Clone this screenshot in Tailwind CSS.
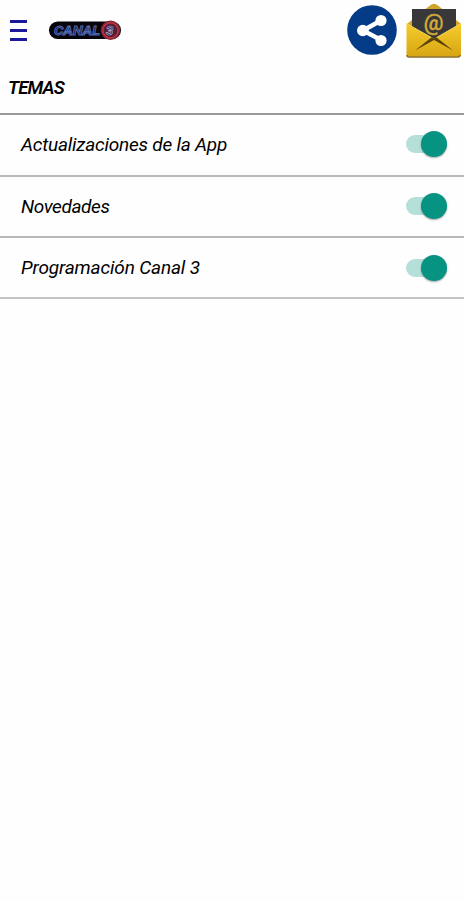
<!DOCTYPE html>
<html lang="es">
  <head>
    <meta charset="UTF-8" />
    <meta name="viewport" content="width=device-width, initial-scale=1.0" />
    <title>Canal 3 - Temas</title>
    <script src="https://cdn.jsdelivr.net/npm/@tailwindcss/browser@4"></script>
  </head>
  <body class="bg-[#fefefe] text-black min-h-screen font-['Roboto','Open_Sans',sans-serif]">
    <header class="flex items-center h-[60px] pl-[10px] pr-[2px]">
      <button class="flex flex-col gap-[6px] w-[17px]" aria-label="Menu">
        <span class="h-[3px] w-full bg-[#1c189c]"></span>
        <span class="h-[3px] w-full bg-[#1c189c]"></span>
        <span class="h-[3px] w-full bg-[#1c189c]"></span>
      </button>

      <!-- Logo -->
      <svg class="ml-[21px] w-[74px] h-[22px]" viewBox="0 0 74 22">
        <rect x="1" y="2.5" width="72" height="17.5" rx="8.7" fill="#08060c" />
        <circle cx="62.5" cy="11.3" r="9.7" fill="#8c2638" />
        <circle cx="62.5" cy="11.3" r="7.5" fill="#591c38" stroke="#c13645" stroke-width="1.2" />
        <text x="6" y="15.5" textLength="46" lengthAdjust="spacingAndGlyphs" font-family="Roboto, sans-serif" font-size="12.5" font-weight="700" font-style="italic" fill="#10215f" stroke="#5469ad" stroke-width="0.8">CANAL</text>
        <text x="58" y="15.8" font-family="Roboto, sans-serif" font-size="13" font-weight="700" font-style="italic" fill="#1c2963" stroke="#a9a5c2" stroke-width="0.7">3</text>
      </svg>

      <!-- Share -->
      <svg class="ml-auto w-[50px] h-[50px]" viewBox="0 0 50 50">
        <circle cx="25" cy="25" r="24.8" fill="#043b87" />
        <path d="M34 15.500 16 25.500l18 9.500" fill="none" stroke="#fff" stroke-width="4.5" />
        <circle cx="34" cy="15.5" r="5.6" fill="#fff" />
        <circle cx="15.8" cy="25.5" r="5.8" fill="#fff" />
        <circle cx="34" cy="35.5" r="5.6" fill="#fff" />
      </svg>

      <!-- Mail -->
      <svg class="ml-[9px] w-[56px] h-[58px]" viewBox="0 0 56 58">
        <defs>
          <linearGradient id="gold" x1="0" y1="0" x2="0" y2="1">
            <stop offset="0" stop-color="#f5cd2c" />
            <stop offset="1" stop-color="#d8a514" />
          </linearGradient>
        </defs>
        <path d="M1 23 24 4.500q4-3.500 8 0l23 18.500v4H1z" fill="#d1a52c" />
        <path d="M6 8h44v26L28 43 6 31z" fill="#38383a" />
        <path d="M0.500 22.500 28 38l27-15.500V53q0 2.500-2.500 2.500H3q-2.500 0-2.500-2.500z" fill="url(#gold)" />
        <path d="M0.500 22.500 28 38l27-15.500" fill="none" stroke="#f5d858" stroke-width="1" />
        <path d="M9 49.500 26 36l2 1.500 2-1.500 17 13.500L28 39z" fill="#574208" />
        <path d="M1 54q0 2 2 2h49q2 0 2-2" fill="none" stroke="#8b6919" stroke-width="1.5" />
        <text x="27.500" y="28.500" text-anchor="middle" font-family="Roboto, sans-serif" font-size="22" font-weight="500" fill="#d5ac37" stroke="#d5ac37" stroke-width="0.3">@</text>
      </svg>
    </header>

    <main>
      <h1 class="h-[55px] pl-[8px] border-b-2 border-[#999] text-[18.5px] leading-[56px] font-semibold italic">
        <span class="inline-block tracking-[-0.8px]">TEMAS</span>
      </h1>
      <ul class="text-[19px] italic">
        <li class="flex items-center justify-between h-[62px] pl-[21px] pr-[17px] border-b-2 border-[#b8b8b8]">
          <span class="tracking-[-0.22px]">Actualizaciones de la App</span>
          <span class="flex items-center justify-end w-[41px] h-[18px] mb-[2px] rounded-full bg-[#b5e0da]">
            <span class="size-[26px] rounded-full bg-[#079382] shadow-[0_1px_2px_rgba(0,0,0,0.35)]"></span>
          </span>
        </li>
        <li class="flex items-center justify-between h-[61px] pl-[21px] pr-[17px] border-b-2 border-[#b8b8b8]">
          <span class="mt-px tracking-[-0.4px]">Novedades</span>
          <span class="flex items-center justify-end w-[41px] h-[18px] mb-px rounded-full bg-[#b5e0da]">
            <span class="size-[26px] rounded-full bg-[#079382] shadow-[0_1px_2px_rgba(0,0,0,0.35)]"></span>
          </span>
        </li>
        <li class="flex items-center justify-between h-[61px] pl-[21px] pr-[17px] border-b-2 border-[#c4c4c4]">
          <span class="mt-[2px] tracking-[-0.15px]">Programación Canal 3</span>
          <span class="flex items-center justify-end w-[41px] h-[18px] rounded-full bg-[#b5e0da]">
            <span class="size-[26px] rounded-full bg-[#079382] shadow-[0_1px_2px_rgba(0,0,0,0.35)]"></span>
          </span>
        </li>
      </ul>
    </main>
  </body>
</html>
